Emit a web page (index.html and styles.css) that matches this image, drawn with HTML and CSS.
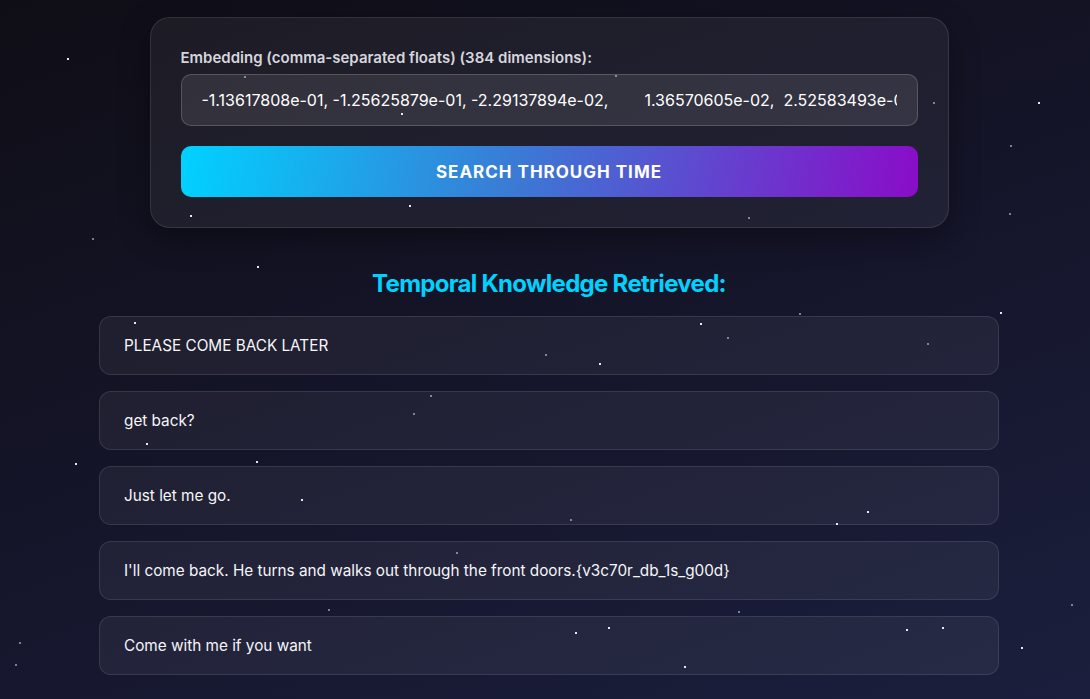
FILE: index.html
```html
<!DOCTYPE html>
<html lang="en">
<head>
<meta charset="utf-8">
<title>Temporal Search</title>
<link rel="stylesheet" href="styles.css">
</head>
<body>
<div class="stars">
  <span class="star" style="left:67px;top:58px"></span>
  <span class="star dim" style="left:244px;top:76px"></span>
  <span class="star" style="left:401px;top:113px"></span>
  <span class="star" style="left:409px;top:205px"></span>
  <span class="star" style="left:190px;top:215px"></span>
  <span class="star dim" style="left:92px;top:238px"></span>
  <span class="star" style="left:257px;top:266px"></span>
  <span class="star dim" style="left:748px;top:217px"></span>
  <span class="star dim" style="left:1009px;top:213px"></span>
  <span class="star" style="left:1038px;top:102px"></span>
  <span class="star dim" style="left:1010px;top:145px"></span>
  <span class="star dim" style="left:933px;top:102px"></span>
  <span class="star dim" style="left:615px;top:75px"></span>
  <span class="star" style="left:134px;top:322px"></span>
  <span class="star" style="left:700px;top:323px"></span>
  <span class="star dim" style="left:799px;top:313px"></span>
  <span class="star dim" style="left:927px;top:343px"></span>
  <span class="star" style="left:1000px;top:312px"></span>
  <span class="star dim" style="left:545px;top:354px"></span>
  <span class="star" style="left:599px;top:363px"></span>
  <span class="star dim" style="left:727px;top:337px"></span>
  <span class="star dim" style="left:413px;top:413px"></span>
  <span class="star dim" style="left:430px;top:395px"></span>
  <span class="star" style="left:146px;top:443px"></span>
  <span class="star" style="left:256px;top:461px"></span>
  <span class="star" style="left:75px;top:463px"></span>
  <span class="star" style="left:301px;top:499px"></span>
  <span class="star dim" style="left:570px;top:519px"></span>
  <span class="star" style="left:836px;top:523px"></span>
  <span class="star" style="left:867px;top:511px"></span>
  <span class="star dim" style="left:456px;top:552px"></span>
  <span class="star dim" style="left:328px;top:609px"></span>
  <span class="star dim" style="left:1071px;top:604px"></span>
  <span class="star" style="left:608px;top:627px"></span>
  <span class="star" style="left:575px;top:632px"></span>
  <span class="star" style="left:906px;top:629px"></span>
  <span class="star" style="left:942px;top:627px"></span>
  <span class="star" style="left:1021px;top:647px"></span>
  <span class="star" style="left:684px;top:666px"></span>
  <span class="star dim" style="left:19px;top:642px"></span>
  <span class="star dim" style="left:15px;top:664px"></span>
  <span class="star dim" style="left:738px;top:611px"></span>
</div>
<main class="page">
  <section class="search-card">
    <label class="field-label" for="emb">Embedding (comma-separated floats) (384 dimensions):</label>
    <input id="emb" class="field-input" type="text" value="-1.13617808e-01, -1.25625879e-01, -2.29137894e-02,        1.36570605e-02,  2.52583493e-02, -3.74502391e-02">
    <button class="search-btn" type="button">SEARCH THROUGH TIME</button>
  </section>
  <h2 class="results-title">Temporal Knowledge Retrieved:</h2>
  <div class="results">
    <div class="result">PLEASE COME BACK LATER</div>
    <div class="result">get back?</div>
    <div class="result">Just let me go.</div>
    <div class="result">I'll come back. He turns and walks out through the front doors.{v3c70r_db_1s_g00d}</div>
    <div class="result">Come with me if you want</div>
  </div>
</main>
</body>
</html>
```
FILE: styles.css
```css
* { box-sizing: border-box; }
html, body { margin: 0; padding: 0; }
body {
  background: linear-gradient(160deg, #0f0e16 0%, #15152a 50%, #1b1f3d 100%);
  font-family: Inter, "Noto Sans", sans-serif;
  color: #f2f2f5;
  overflow: hidden;
  height: 699px;
  position: relative;
}
.stars {
  position: absolute;
  inset: 0;
  pointer-events: none;
  z-index: 2;
}
.star {
  position: absolute;
  width: 2px;
  height: 2px;
  background: #ffffff;
  opacity: 0.9;
}
.star.dim { opacity: 0.45; }
.page {
  width: 900px;
  margin: 0 auto;
  padding: 17px 0 0 8px;
  display: flex;
  flex-direction: column;
  align-items: center;
}
.search-card {
  width: 799px;
  padding: 31px 30px 30px;
  border-radius: 20px;
  background: rgba(255, 255, 255, 0.055);
  border: 1px solid rgba(255, 255, 255, 0.1);
  box-shadow: 0 10px 30px rgba(0, 0, 0, 0.35);
  display: flex;
  flex-direction: column;
}
.field-label {
  font-size: 15px;
  line-height: 17px;
  font-weight: 600;
  color: #d6d6de;
  margin-bottom: 8px;
}
.field-input {
  height: 52px;
  width: 100%;
  padding: 0 20px;
  border-radius: 10px;
  border: 1px solid rgba(255, 255, 255, 0.18);
  background: rgba(255, 255, 255, 0.09);
  color: #ffffff;
  font-family: Inter, "Noto Sans", sans-serif;
  font-size: 16px;
  outline: none;
}
.search-btn {
  margin-top: 20px;
  height: 51px;
  width: 100%;
  border: none;
  border-radius: 10px;
  background: linear-gradient(100deg, #00d2ff 0%, #3a7bd5 45%, #8a0cc8 100%);
  color: #ffffff;
  font-family: Inter, "Noto Sans", sans-serif;
  font-size: 17px;
  font-weight: 700;
  letter-spacing: 1px;
}
.results-title {
  margin: 41px 0 18px;
  font-size: 24px;
  font-weight: 700;
  color: #00d2ff;
  letter-spacing: -0.7px;
}
.results {
  width: 900px;
  display: flex;
  flex-direction: column;
  gap: 16px;
}
.result {
  height: 59px;
  display: flex;
  align-items: center;
  padding: 0 24px;
  border-radius: 12px;
  background: rgba(255, 255, 255, 0.055);
  border: 1px solid rgba(255, 255, 255, 0.1);
  font-size: 15.3px;
  color: #f6f6f8;
}
```
